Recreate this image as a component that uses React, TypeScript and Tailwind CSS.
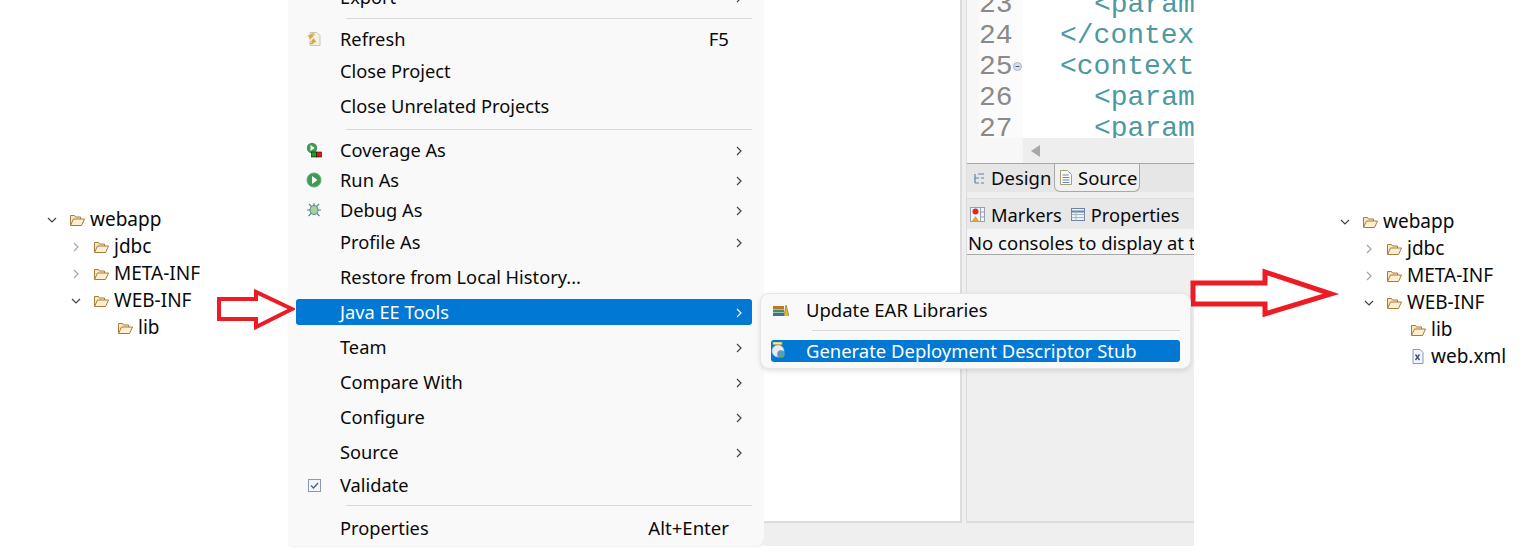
import type { ReactNode } from "react";

const UI_FONT = "font-['Noto_Sans','Open_Sans',sans-serif]";

/* ================= ICONS ================= */
const Folder = () => (
  <svg width="16" height="14" viewBox="0 0 16 14" className="shrink-0">
    <path d="M1.5 12V2.500h4l1 1.500h5v2" fill="#fbe7bd" stroke="#a87a3c" strokeWidth="1" />
    <path d="M1.5 12.500 4.500 6h11l-3 6.500z" fill="#fdf0d2" stroke="#a87a3c" strokeWidth="1" strokeLinejoin="round" />
  </svg>
);

const XmlFile = () => (
  <svg width="12" height="15" viewBox="0 0 12 15" className="shrink-0">
    <path d="M1 .5h7l3 3v11H1z" fill="#f3f5fa" stroke="#8b97b5" />
    <path d="M3.500 5.500 7.500 11M7.500 5.500 3.500 11" stroke="#3b4a78" strokeWidth="1.300" />
  </svg>
);

const Chevron = ({ open, light, white }: { open?: boolean; light?: boolean; white?: boolean }) => {
  const color = white ? "#ffffff" : light ? "#a6a6a6" : "#444444";
  return (
    <svg width="10" height="10" viewBox="0 0 10 10" className="shrink-0">
      <path
        d={open ? "M1 3l4 4 4-4" : "M3 1l4 4-4 4"}
        fill="none"
        stroke={color}
        strokeWidth="1.200"
      />
    </svg>
  );
};

const RefreshIcon = () => (
  <svg width="16" height="16" viewBox="0 0 16 16">
    <path d="M4 1.500h7l3 3v10H4z" fill="#f4f1e6" stroke="#c9c6b8" />
    <path d="M8.500 3.500a2.500 2.500 0 0 0-4 1.500L3 5l1.500 2L6.500 5H5.500" fill="none" stroke="#d9a441" strokeWidth="1.500" />
    <path d="M4 12a2.500 2.500 0 0 0 4-1.500L9 10.500 7.500 8.500 6 10.500h1" fill="none" stroke="#d9a441" strokeWidth="1.500" />
  </svg>
);

const CoverageIcon = () => (
  <svg width="16" height="16" viewBox="0 0 16 16">
    <circle cx="6" cy="6" r="5.200" fill="#3f9a58" />
    <path d="M4.500 3l4.200 3-4.200 3z" fill="#ffffff" />
    <rect x="5.500" y="10" width="5" height="5" fill="#19a319" stroke="#111111" strokeWidth=".6" />
    <rect x="10.500" y="10" width="5" height="5" fill="#d81818" stroke="#111111" strokeWidth=".6" />
  </svg>
);

const RunIcon = () => (
  <svg width="16" height="16" viewBox="0 0 16 16">
    <circle cx="8" cy="8" r="7" fill="#3f9a58" stroke="#5fae74" />
    <path d="M6 4l5.500 4-5.500 4z" fill="#ffffff" />
  </svg>
);

const DebugIcon = () => (
  <svg width="16" height="16" viewBox="0 0 16 16">
    <path
      d="M8 1v3M3 2l3 3M13 2l-3 3M1 8h3M15 8h-3M2.500 14 5.500 11M13.500 14l-3-3"
      stroke="#4f8a80"
      strokeWidth="1.100"
      fill="none"
    />
    <ellipse cx="8" cy="8" rx="4" ry="4.500" fill="#a9cfa4" stroke="#4f8a80" />
  </svg>
);

const CheckIcon = () => (
  <svg width="13" height="13" viewBox="0 0 13 13">
    <rect x=".5" y=".5" width="12" height="12" fill="#f2f5fa" stroke="#8a98b5" />
    <path d="M3 6.500 5.500 9 10 4" fill="none" stroke="#47618f" strokeWidth="1.300" />
  </svg>
);

const EarIcon = () => (
  <svg width="16" height="14" viewBox="0 0 16 14">
    <rect x="0" y="3" width="11" height="3" fill="#b9772d" />
    <rect x="0" y="6.500" width="11" height="3" fill="#3f8f62" />
    <rect x="0" y="10" width="11" height="3" fill="#3d6c9e" />
    <path d="M11 13 13 2l3 11" fill="#e5b53c" stroke="#a87f1e" strokeWidth=".8" />
  </svg>
);

const GenerateIcon = () => (
  <svg width="16" height="18" viewBox="0 0 16 18">
    <rect x="2" y="0" width="9" height="2.500" fill="#f6e4a6" stroke="#caa84e" strokeWidth=".7" />
    <circle cx="7" cy="9" r="6" fill="#e6ebf0" stroke="#b6c2cc" strokeWidth=".7" />
    <circle cx="10" cy="12" r="3.800" fill="#5a9ac7" />
    <path d="M8 11.500h3.500M9 14h3" stroke="#6aa55b" strokeWidth="1.300" />
  </svg>
);

const DesignIcon = () => (
  <svg width="12" height="13" viewBox="0 0 12 13">
    <path d="M2 2v9M2 6h4M2 11h4M5 2h6M8 6h3M8 11h3" stroke="#5f80b0" strokeWidth="1.200" fill="none" />
  </svg>
);

const SourceIcon = () => (
  <svg width="12" height="15" viewBox="0 0 12 15">
    <path d="M.5.5h7l4 4v10H.5z" fill="#fdfdf6" stroke="#a89b6f" />
    <path d="M2.500 5h6M2.500 7.500h7M2.500 10h7M2.500 12.500h7" stroke="#5f86c0" />
  </svg>
);

const MarkersIcon = () => (
  <svg width="15" height="15" viewBox="0 0 15 15">
    <rect x=".5" y=".5" width="14" height="14" fill="#f5f5f5" stroke="#93a0b8" />
    <path d="M10.500 1v13M10.500 5h4M10.500 10h4" stroke="#93a0b8" />
    <circle cx="5.500" cy="4.500" r="3" fill="#e0262b" />
    <path d="M2 14l3.500-5L9 14z" fill="#e9a13b" />
  </svg>
);

const PropertiesIcon = () => (
  <svg width="14" height="13" viewBox="0 0 14 13">
    <rect x=".5" y=".5" width="13" height="12" fill="#eef2f8" stroke="#6f82a8" />
    <path d="M.5 3.500h13" stroke="#6f82a8" strokeWidth="2" />
    <path d="M.5 6.500h13M.5 9.500h13M5 3.500v9" stroke="#aab6cc" />
  </svg>
);

const FoldIcon = () => (
  <svg width="9" height="9" viewBox="0 0 9 9" className="shrink-0">
    <circle cx="4.500" cy="4.500" r="4" fill="#d7dfeb" stroke="#a9b4c6" />
    <path d="M2.500 4.500h4" stroke="#4a5a78" />
  </svg>
);

const ArrowLeft = () => (
  <svg width="80" height="42" viewBox="0 0 80 42" className="absolute left-[215px] top-[288px]">
    <path
      d="M4 11h37V4l36 17-36 18v-8H4z"
      fill="#ffffff"
      stroke="#ed1c24"
      strokeWidth="4"
      strokeLinejoin="miter"
    />
  </svg>
);

const ArrowRight = () => (
  <svg width="152" height="50" viewBox="0 0 152 50" className="absolute left-[1189px] top-[268px] overflow-visible">
    <path d="M4 15h72V4l66 22-66 20V36H4z" fill="#ffffff" stroke="#ed1c24" strokeWidth="5" />
  </svg>
);

/* ================= TREES ================= */
const TreeRow = ({
  indent,
  chevron,
  icon,
  label,
}: {
  indent: string;
  chevron?: ReactNode;
  icon: ReactNode;
  label: string;
}) => (
  <div className={`flex h-[27px] items-center ${indent}`}>
    <span className="flex w-[22px] shrink-0 items-center">{chevron}</span>
    <span className="flex w-[21px] shrink-0 items-center">{icon}</span>
    <span className="text-[19px] text-[#0a0a0a]">{label}</span>
  </div>
);

const FileTree = ({ withXml }: { withXml?: boolean }) => (
  <div>
    <TreeRow indent="pl-[0px]" chevron={<Chevron open />} icon={<Folder />} label="webapp" />
    <TreeRow indent="pl-[24px]" chevron={<Chevron light />} icon={<Folder />} label="jdbc" />
    <TreeRow indent="pl-[24px]" chevron={<Chevron light />} icon={<Folder />} label="META-INF" />
    <TreeRow indent="pl-[24px]" chevron={<Chevron open />} icon={<Folder />} label="WEB-INF" />
    <TreeRow indent="pl-[48px]" icon={<Folder />} label="lib" />
    {withXml && <TreeRow indent="pl-[48px]" icon={<span className="pl-[2px]"><XmlFile /></span>} label="web.xml" />}
  </div>
);

/* ================= CONTEXT MENU ================= */
type MenuRow =
  | { sep: true; h: string }
  | { label: string; h: string; icon?: ReactNode; sub?: boolean; hint?: string; active?: boolean };

const MENU: MenuRow[] = [
  { label: "Export", h: "h-[26px]", sub: true },
  { sep: true, h: "h-[16px]" },
  { label: "Refresh", h: "h-[26px]", icon: <RefreshIcon />, hint: "F5" },
  { label: "Close Project", h: "h-[38px]" },
  { label: "Close Unrelated Projects", h: "h-[32px]" },
  { sep: true, h: "h-[14px]" },
  { label: "Coverage As", h: "h-[28px]", icon: <CoverageIcon />, sub: true },
  { label: "Run As", h: "h-[32px]", icon: <RunIcon />, sub: true },
  { label: "Debug As", h: "h-[28px]", icon: <DebugIcon />, sub: true },
  { label: "Profile As", h: "h-[36px]", sub: true },
  { label: "Restore from Local History...", h: "h-[34px]" },
  { label: "Java EE Tools", h: "h-[36px]", sub: true, active: true },
  { label: "Team", h: "h-[34px]", sub: true },
  { label: "Compare With", h: "h-[36px]", sub: true },
  { label: "Configure", h: "h-[34px]", sub: true },
  { label: "Source", h: "h-[36px]", sub: true },
  { label: "Validate", h: "h-[30px]", icon: <CheckIcon /> },
  { sep: true, h: "h-[10px]" },
  { label: "Properties", h: "h-[36px]", hint: "Alt+Enter" },
];

const ContextMenu = () => (
  <div className="h-[546px] w-[476px] shrink-0 overflow-hidden rounded-br-lg bg-[#f9f9f9] shadow-[2px_0_3px_rgba(0,0,0,0.12)]">
    <div className="-mt-[16px]">
      {MENU.map((row, i) =>
        "sep" in row ? (
          <div key={i} className={`flex items-center pl-[58px] pr-[12px] ${row.h}`}>
            <div className="h-px w-full bg-[#d9d9d9]" />
          </div>
        ) : (
          <div key={i} className={`flex items-center pl-[8px] pr-[12px] ${row.h}`}>
            <div
              className={`flex h-[26px] w-full items-center rounded-[3px] text-[18.25px] ${
                row.active ? "bg-[#0078d4] text-white" : "text-[#0a0a0a]"
              }`}
            >
              <span className="flex w-[44px] shrink-0 justify-center pl-[3px] pr-[11px]">{row.icon}</span>
              <span className="flex-1">{row.label}</span>
              {row.hint && <span className="pr-[23px] text-[18.6px]">{row.hint}</span>}
              {row.sub && (
                <span className="pr-[8px] pt-[1px]">
                  <Chevron white={row.active} />
                </span>
              )}
            </div>
          </div>
        )
      )}
    </div>
  </div>
);

const SubMenu = () => (
  <div className="absolute left-[760px] top-[293px] flex h-[76px] w-[431px] flex-col rounded-[9px] border border-[#e6e6e6] bg-[#f9f9f9] px-[10px] text-[18.45px] shadow-[0_2px_5px_rgba(0,0,0,0.12)]">
    <div className="flex h-[31px] shrink-0 items-center text-[#0a0a0a]">
      <span className="flex w-[35px] shrink-0 pl-[2px]">
        <EarIcon />
      </span>
      Update EAR Libraries
    </div>
    <div className="ml-[41px] mt-[5px] h-px bg-[#d9d9d9]" />
    <div className="mt-[9px] flex h-[22px] items-center rounded-[3px] bg-[#0078d4] text-white">
      <span className="flex w-[35px] shrink-0">
        <GenerateIcon />
      </span>
      Generate Deployment Descriptor Stub
    </div>
  </div>
);

/* ================= EDITOR ================= */
const LINES = [
  { n: "23", code: "<param", indent: "pl-[71px]" },
  { n: "24", code: "</contex", indent: "pl-[37px]" },
  { n: "25", code: "<context", indent: "pl-[37px]", fold: true },
  { n: "26", code: "<param", indent: "pl-[71px]" },
  { n: "27", code: "<param", indent: "pl-[71px]" },
];

const EditorPane = () => (
  <div className="flex h-[546px] min-w-0 flex-1 flex-col bg-[#efefef]">
    <div className="flex h-[523px] min-h-0">
      <div className="w-[198px] shrink-0 border-b-2 border-r-2 border-[#dcdcdc] bg-white" />
      <div className="w-[4px] shrink-0" />
      <div className="flex min-w-0 flex-1 flex-col overflow-hidden border-b-2 border-l border-[#dcdcdc] bg-[#efefef]">
        <div className="h-[138px] shrink-0 overflow-hidden bg-[#f7f7f7] pl-[12px]">
          <div className="-mt-[11px] bg-white font-['Liberation_Mono',monospace] text-[28px] leading-[31px]">
            {LINES.map((l) => (
              <div key={l.n} className="flex h-[31px]">
                <div className="flex w-[44px] shrink-0 items-center bg-[#fbfbfb] text-[#8a8a8a]">
                  <span className="w-[34px] shrink-0">{l.n}</span>
                  {l.fold && <FoldIcon />}
                </div>
                <div className={`whitespace-nowrap text-[#4b9aa0] ${l.indent}`}>{l.code}</div>
              </div>
            ))}
          </div>
        </div>
        <div className="flex h-[25px] shrink-0 items-center">
          <div className="h-full w-[56px] shrink-0 bg-[#f7f7f7]" />
          <div className="flex h-full flex-1 items-center bg-[#eeeeee] pl-[8px]">
            <div className="h-0 w-0 border-y-[6px] border-r-[9px] border-y-transparent border-r-[#a8a8a8]" />
          </div>
        </div>
        <div className="flex h-[29px] shrink-0 items-stretch border-t border-[#a8a8a8] bg-[#e6e6e6] text-[18.5px] text-[#0a0a0a]">
          <div className="flex w-[87px] items-center gap-[6px] pl-[6px]">
            <DesignIcon />
            Design
          </div>
          <div className="flex w-[86px] items-center gap-[6px] rounded-b-md border-x border-b border-[#a8a8a8] bg-[#f0f0f0] pl-[5px]">
            <SourceIcon />
            Source
          </div>
        </div>
        <div className="mt-[6px] flex h-[31px] shrink-0 items-center gap-[6px] border-t border-[#dedede] bg-[#e8e8e8] pl-[3px] pt-[1px] text-[18.3px] text-[#0a0a0a]">
          <MarkersIcon />
          <span className="mr-[3px]">Markers</span>
          <PropertiesIcon />
          <span>Properties</span>
        </div>
        <div className="flex h-[26px] shrink-0 items-center overflow-hidden whitespace-nowrap border-b border-[#a8a8a8] bg-[#f5f5f5] pl-[1px] pt-[3px] text-[18.5px] text-[#0a0a0a]">
          No consoles to display at this time.
        </div>
      </div>
    </div>
  </div>
);

/* ================= APP ================= */
const App = () => {
  return (
    <div className={`relative flex h-[556px] w-[1533px] overflow-hidden bg-white ${UI_FONT}`}>
      <div className="w-[288px] shrink-0 pl-[47px] pt-[206px]">
        <FileTree />
      </div>
      <div className="flex h-[546px] w-[906px] shrink-0">
        <ContextMenu />
        <EditorPane />
      </div>
      <div className="flex-1 pl-[146px] pt-[208px]">
        <FileTree withXml />
      </div>
      <ArrowLeft />
      <ArrowRight />
      <SubMenu />
    </div>
  );
};

export default App;
